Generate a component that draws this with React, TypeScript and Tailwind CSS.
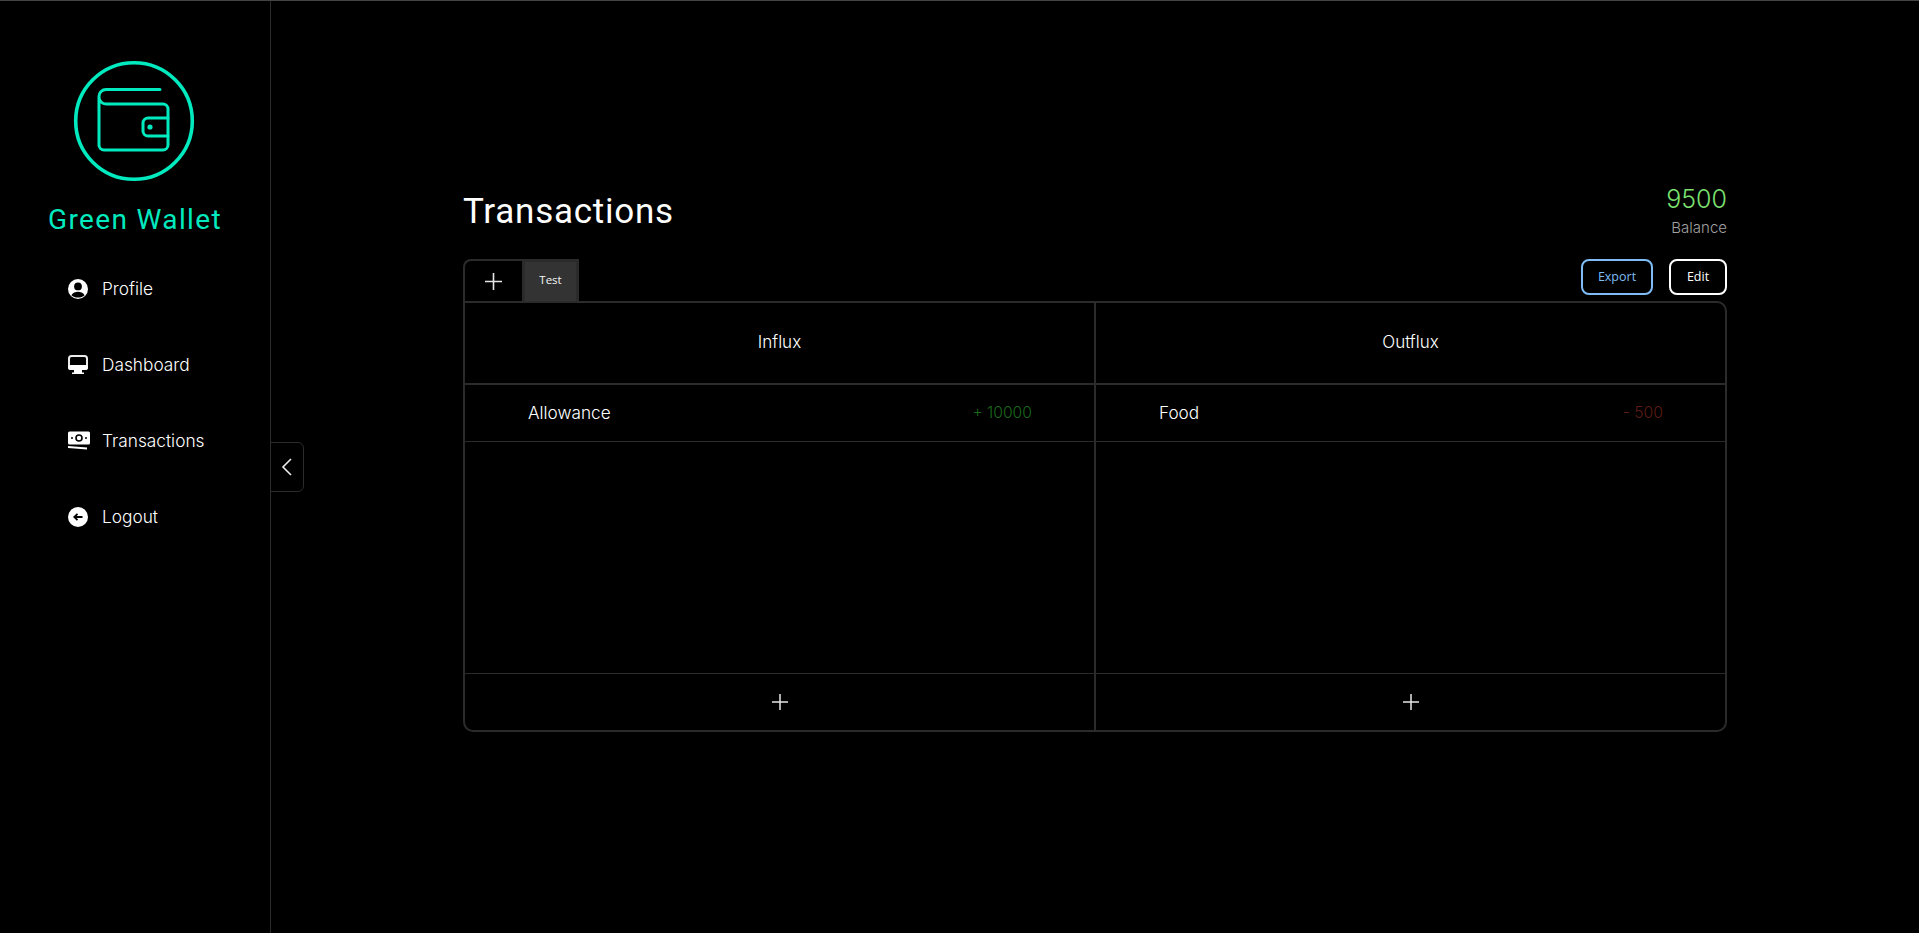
import { useState } from "react";

function Wallet() {
  return (
    <svg width="122" height="122" viewBox="0 0 122 122" fill="none" stroke="#00eabf" strokeLinecap="round" strokeLinejoin="round">
      <circle cx="61" cy="61" r="58.3" strokeWidth="3.6" />
      <g strokeWidth="3">
        <path d="M87 29.5H33a7 7 0 0 0-7 7v48.5a5 5 0 0 0 5 5h59a5 5 0 0 0 5-5V49a5 5 0 0 0-5-5H33a7 7 0 0 1-7-7" />
        <path d="M95 58H75a5 5 0 0 0-5 5v8a5 5 0 0 0 5 5h20" />
      </g>
      <circle cx="77" cy="67" r="2.6" fill="#00eabf" stroke="none" />
    </svg>
  );
}

function Plus({ size }: { size: number }) {
  return (
    <svg width={size} height={size} viewBox="0 0 16 16" stroke="#e6e6e6" strokeWidth="1.5" fill="none">
      <path d="M8 0v16M0 8h16" />
    </svg>
  );
}

function ProfileIcon() {
  return (
    <svg width="20" height="20" viewBox="0 0 20 20">
      <circle cx="10" cy="10" r="10" fill="#fff" />
      <circle cx="10" cy="7.4" r="3.9" fill="#000" />
      <path d="M3.4 16.2C5 13.6 7.4 12.8 10 12.8s5 .8 6.6 3.4C15 17.9 12.5 18.6 10 18.6s-5-.7-6.6-2.4Z" fill="#000" />
    </svg>
  );
}

function DashIcon() {
  return (
    <svg width="20" height="20" viewBox="0 0 20 20">
      <rect x="1" y="1" width="18" height="13" rx="2.5" fill="#000" stroke="#ececec" strokeWidth="2" />
      <rect x="0" y="10" width="20" height="5" rx="2.5" fill="#fff" />
      <path d="M6 15h8v2.5h2V19H4v-1.5h2Z" fill="#fff" />
    </svg>
  );
}

function CashIcon() {
  return (
    <svg width="22" height="20" viewBox="0 0 22 20">
      <rect x="0" y="0.5" width="22" height="13" rx="1.5" fill="#fff" />
      <circle cx="11" cy="7" r="3" fill="none" stroke="#000" strokeWidth="1.6" />
      <circle cx="4" cy="7" r="1" fill="#000" />
      <circle cx="18" cy="7" r="1" fill="#000" />
      <path d="M0 15 19 16.5v2L0 17Z" fill="#fff" />
    </svg>
  );
}

function LogoutIcon() {
  return (
    <svg width="20" height="20" viewBox="0 0 20 20">
      <circle cx="10" cy="10" r="10" fill="#fff" />
      <path d="M14.5 10H6.5M9.5 6.8 6.3 10l3.2 3.2" fill="none" stroke="#000" strokeWidth="1.8" />
    </svg>
  );
}

const nav = [
  { label: "Profile", icon: <ProfileIcon /> },
  { label: "Dashboard", icon: <DashIcon /> },
  { label: "Transactions", icon: <CashIcon /> },
  { label: "Logout", icon: <LogoutIcon /> },
];

function Column({ title, item, amount, color, border }: { title: string; item: string; amount: string; color: string; border: boolean }) {
  return (
    <div className={`flex flex-1 flex-col ${border ? "border-r-2 border-[#2b2b2b]" : ""}`}>
      <div className="flex h-[82px] items-center justify-center border-b-2 border-[#2b2b2b] text-[17px] font-light text-white">{title}</div>
      <div className="flex h-[57px] items-center justify-between border-b border-[#2b2b2b] pl-[63px] pr-[62px] text-[17.2px] font-light text-white">
        <span>{item}</span>
        <span className={`text-[15.7px] ${color}`}>{amount}</span>
      </div>
      <div className="flex-1" />
      <div className="flex h-[57px] items-center justify-center border-t border-[#2b2b2b]">
        <Plus size={16} />
      </div>
    </div>
  );
}

export default function App() {
  const [open] = useState(true);
  return (
    <div className="relative flex h-[933px] overflow-hidden border-t border-[#444444] bg-black font-['Inter',sans-serif] text-white">
      <aside className="flex w-[271px] shrink-0 flex-col border-r border-[#2b2b2b]">
        <div className="ml-[73px] mt-[59px]">
          <Wallet />
        </div>
        <div className="mt-[21px] text-center font-['Roboto',sans-serif] text-[28px] leading-[34px] tracking-[1.35px] text-[#00eabf]">Green Wallet</div>
        <nav className="ml-[68px] mt-[14px] flex flex-col">
          {nav.map((n) => (
            <div key={n.label} className="flex h-[76px] items-center text-[17.3px] font-light text-white">
              <span className="flex w-[34px] shrink-0">{n.icon}</span>
              <span>{n.label}</span>
            </div>
          ))}
        </nav>
      </aside>

      {open && (
        <div className="absolute left-[270px] top-[441px] flex h-[50px] w-[34px] items-center justify-center rounded-r-[6px] border border-[#2b2b2b] bg-black">
          <svg width="12" height="20" viewBox="0 0 12 20" fill="none" stroke="#eeeeee" strokeWidth="1.6">
            <path d="M10 2 2 10l8 8" />
          </svg>
        </div>
      )}

      <main className="ml-[192px] mt-[184px] flex h-[547px] w-[1264px] flex-col">
        <div className="flex h-[74px] items-start justify-between">
          <h1 className="mt-[6px] font-['Roboto',sans-serif] text-[35px] leading-[42px] tracking-[0.75px] text-white">Transactions</h1>
          <div className="flex flex-col items-end">
            <div className="-mt-px text-[25px] font-light leading-[30px] text-[#7be06f]">9500</div>
            <div className="mt-[4px] text-[15px] font-light leading-[20px] text-[#a0a0a0]">Balance</div>
          </div>
        </div>
        <div className="flex h-[42px] items-start justify-between">
          <div className="flex h-[42px]">
            <div className="flex w-[59px] items-center justify-center rounded-tl-[8px] border-l-2 border-t-2 border-[#2b2b2b]">
              <Plus size={17} />
            </div>
            <div className="flex w-[57px] items-center justify-center border-[3px] border-b-0 border-[#2b2b2b] bg-[#333333] pb-[3px] font-['Open_Sans',sans-serif] text-[11.5px] text-[#f5f5f5]">Test</div>
          </div>
          <div className="flex gap-[16px]">
            <div className="flex h-[36px] w-[72px] items-center justify-center rounded-[8px] border-2 border-[#7dbcf5] font-['Open_Sans',sans-serif] text-[12.5px] text-[#7dbcf5]">Export</div>
            <div className="flex h-[36px] w-[58px] items-center justify-center rounded-[8px] border-2 border-white font-['Open_Sans',sans-serif] text-[12.5px] text-white">Edit</div>
          </div>
        </div>
        <div className="flex flex-1 rounded-b-[10px] rounded-tr-[10px] border-2 border-[#2b2b2b]">
          <Column title="Influx" item="Allowance" amount="+ 10000" color="text-[#1b6a1b]" border />
          <Column title="Outflux" item="Food" amount="- 500" color="text-[#5e1c14]" border={false} />
        </div>
      </main>
    </div>
  );
}
